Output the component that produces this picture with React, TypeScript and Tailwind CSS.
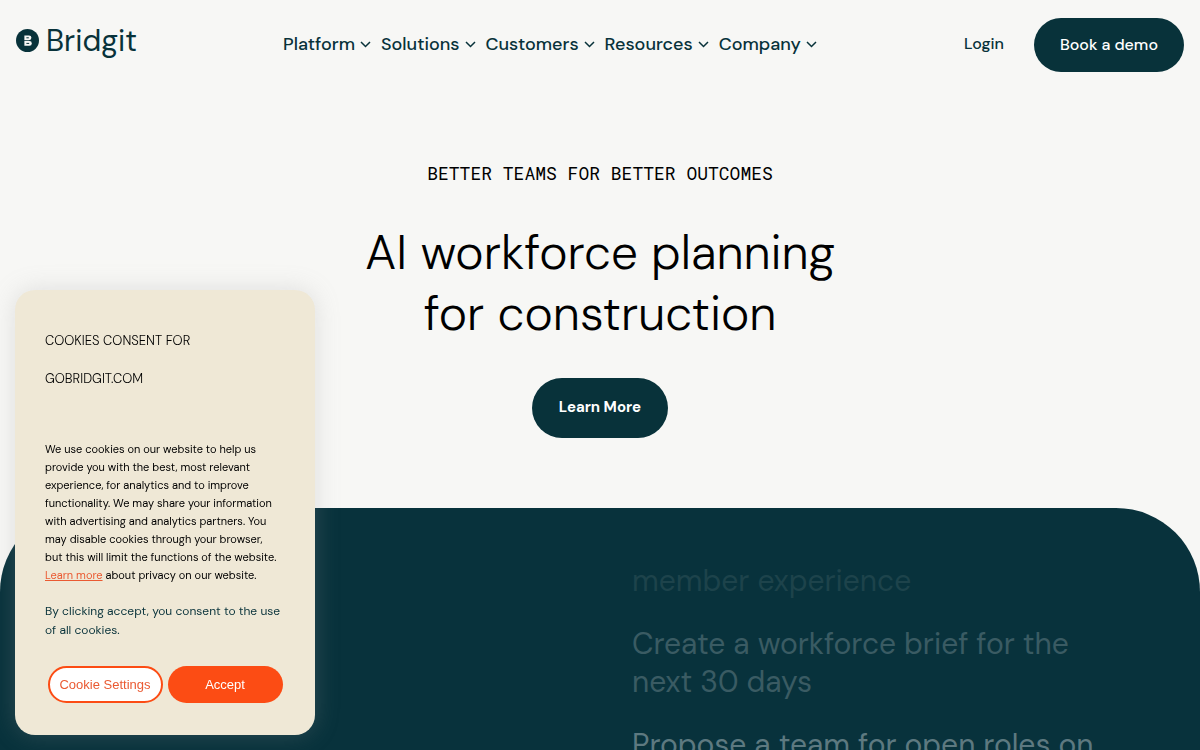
import { Fragment } from 'react';

const navItems = ['Platform', 'Solutions', 'Customers', 'Resources', 'Company'];

const prompts = [
  { lines: ['member experience'], color: 'text-[#1d434b]' },
  { lines: ['Create a workforce brief for the', 'next 30 days'], color: 'text-[#3a5b63]' },
  { lines: ['Propose a team for open roles on'], color: 'text-[#5d7980]' },
];

const cookieLines = [
  'We use cookies on our website to help us',
  'provide you with the best, most relevant',
  'experience, for analytics and to improve',
  'functionality. We may share your information',
  'with advertising and analytics partners. You',
  'may disable cookies through your browser,',
  'but this will limit the functions of the website.',
];

function Chevron() {
  return (
    <svg className="h-3 w-3" viewBox="0 0 12 12" fill="none" stroke="currentColor" strokeWidth="1.5" aria-hidden="true">
      <path d="M1 4 L5.5 8.5 L10 4" />
    </svg>
  );
}

function Logo() {
  return (
    <a href="#" className="flex items-center gap-[6px] text-[#08323a]">
      <svg className="h-6 w-6" viewBox="0 0 24 24" aria-hidden="true">
        <circle cx="11.5" cy="11.5" r="11.5" fill="currentColor" />
        <g fill="#f7f7f5">
          <path d="M8.4 6.4 H13 A2.4 2.4 0 0 1 13 11.2 H8.4 Z" />
          <path d="M8.4 12 H13.4 A2.4 2.4 0 0 1 13.4 16.8 H8.4 Z" />
        </g>
        <path d="M10.4 8.8 H12.8 M10.4 14.4 H13.2" stroke="currentColor" strokeWidth="1" />
      </svg>
      <span className="text-3xl">Bridgit</span>
    </a>
  );
}

function Header() {
  return (
    <header className="flex h-[90px] items-center justify-between px-4 text-[#08323a]">
      <div className="pb-2">
        <Logo />
      </div>
      <nav className="flex items-center gap-[9px] pb-[2px]">
        {navItems.map((item) => (
          <button key={item} type="button" className="flex items-center gap-[5px] text-lg leading-6 font-medium">
            {item}
            <Chevron />
          </button>
        ))}
      </nav>
      <div className="flex items-center gap-[30px]">
        <a href="#" className="pb-[2px] text-base leading-6 font-medium">Login</a>
        <a href="#" className="rounded-full bg-[#08323a] px-[26px] py-[15px] text-base leading-6 font-medium text-white">
          Book a demo
        </a>
      </div>
    </header>
  );
}

function CookieBanner() {
  return (
    <aside
      aria-label="Cookie consent"
      className="fixed bottom-[15px] left-[15px] w-[300px] rounded-[20px] bg-[#efe8d6] px-[30px] pt-8 pb-8 shadow-[0_0_24px_rgba(150,150,150,0.25)]"
    >
      <h2 className="text-[13px] leading-[38px] font-light text-black">
        COOKIES CONSENT FOR
        <br />
        GOBRIDGIT.COM
      </h2>
      <p className="mt-[42px] text-[11px] leading-[18px] whitespace-nowrap text-black">
        {cookieLines.map((line) => (
          <Fragment key={line}>
            {line}
            <br />
          </Fragment>
        ))}
        <a href="#" className="text-[#ea5a32] underline">Learn more</a> about privacy on our website.
      </p>
      <p className="mt-[18px] text-xs leading-[19px] whitespace-nowrap text-[#08323a]">
        By clicking accept, you consent to the use
        <br />
        of all cookies.
      </p>
      <div className="mt-[26px] flex justify-center gap-[5px] font-['Liberation_Sans',sans-serif] text-[13px]">
        <button type="button" className="h-[37px] w-[115px] rounded-full border-2 border-[#fc4c14] bg-white whitespace-nowrap text-[#ea5a32]">
          Cookie Settings
        </button>
        <button type="button" className="h-[37px] w-[115px] rounded-full bg-[#fc4c14] text-white">
          Accept
        </button>
      </div>
    </aside>
  );
}

export default function App() {
  return (
    <div className="flex h-screen flex-col overflow-hidden bg-[#f7f7f5] font-['DM_Sans',Inter,sans-serif]">
      <Header />
      <main className="flex min-h-0 flex-1 flex-col">
        <section className="flex shrink-0 flex-col items-center pt-[69px] pb-[70px] text-center text-black">
          <p className="font-['Roboto_Mono','Liberation_Mono',monospace] text-lg leading-7">BETTER TEAMS FOR BETTER OUTCOMES</p>
          <h1 className="mt-[35px] text-5xl leading-[61px] font-light">
            AI workforce planning
            <br />
            for construction
          </h1>
          <a href="#" className="mt-[34px] rounded-full bg-[#08323a] px-[27px] pt-[17px] pb-[19px] text-[15px] leading-6 font-bold text-white">
            Learn More
          </a>
        </section>
        <section className="grid min-h-0 flex-1 grid-cols-2 overflow-hidden rounded-t-[84px] bg-[#08323c]">
          <div className="col-start-2 flex flex-col gap-[25px] pt-[54px] pl-8">
            {prompts.map((prompt) => (
              <p key={prompt.lines[0]} className={`text-[30px] leading-[38px] whitespace-nowrap ${prompt.color}`}>
                {prompt.lines.map((line) => (
                  <span key={line} className="block">{line}</span>
                ))}
              </p>
            ))}
          </div>
        </section>
      </main>
      <CookieBanner />
    </div>
  );
}
